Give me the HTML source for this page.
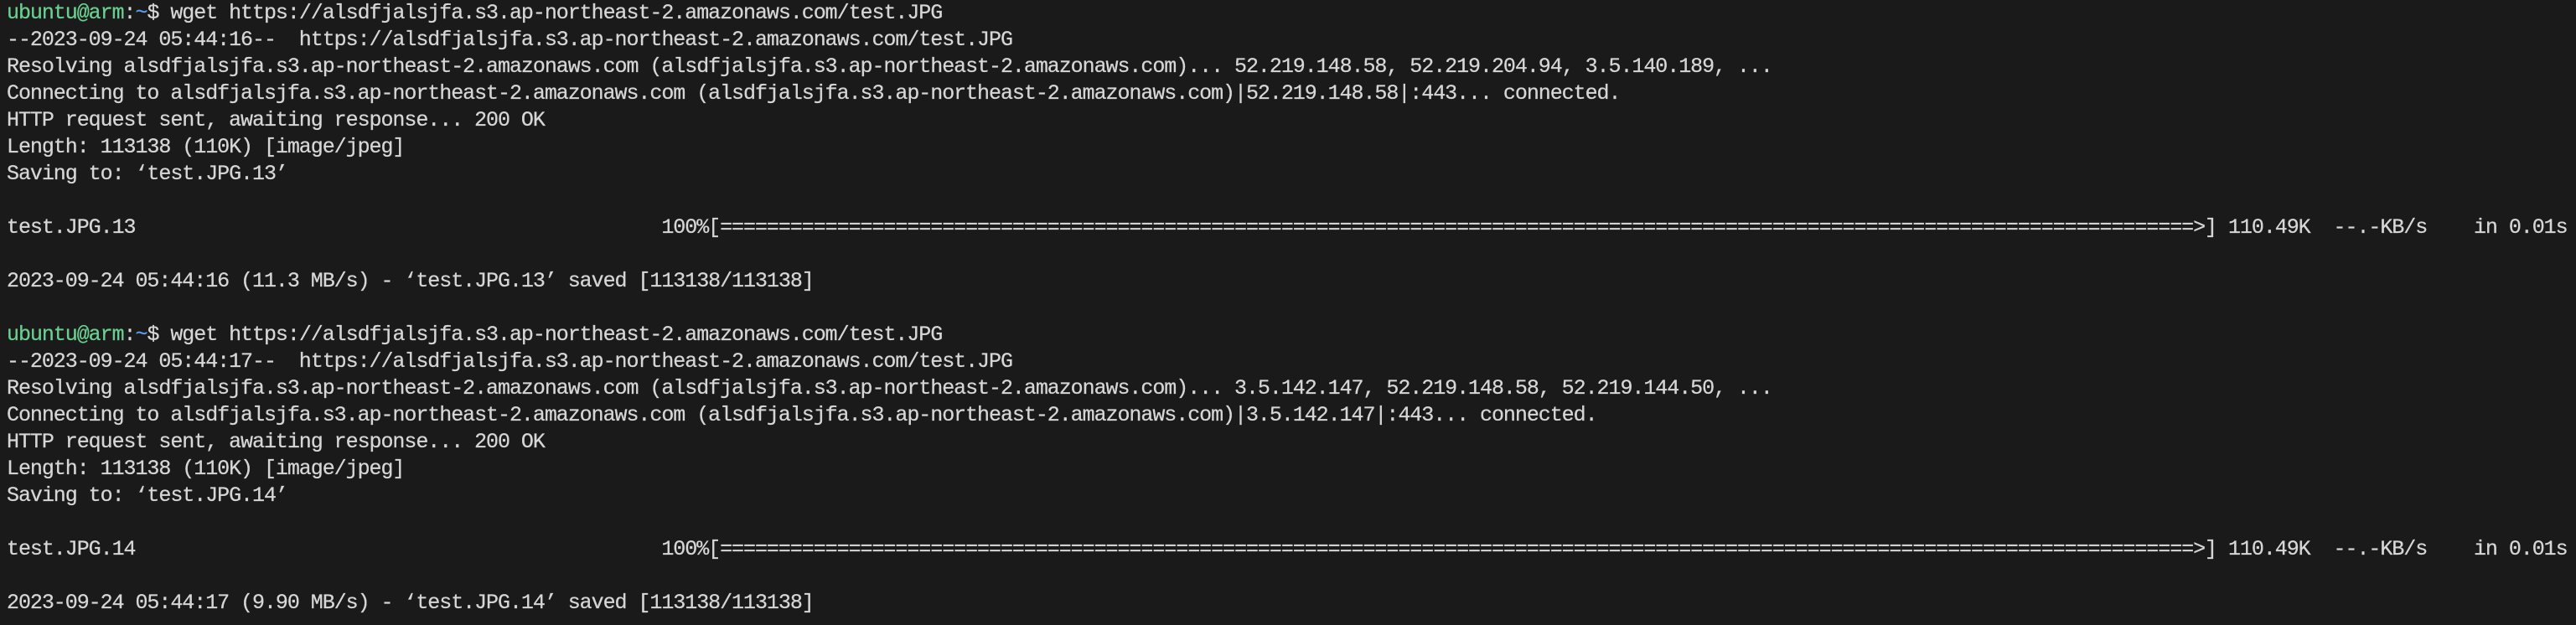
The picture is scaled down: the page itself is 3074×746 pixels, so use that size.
<!DOCTYPE html>
<html><head><meta charset="utf-8"><style>
html,body{margin:0;padding:0;background:#1a1a1a;width:3074px;height:746px;overflow:hidden}
pre{margin:0;padding:0 0 0 8px;font-family:"Liberation Mono",monospace;font-size:25px;letter-spacing:-1.05px;line-height:32px;color:#d6d6d6;white-space:pre;-webkit-text-stroke:0.25px currentColor}
.g{color:#6acf8f}.b{color:#5a9cf2}
</style></head><body><pre><span class="g">ubuntu@arm</span>:<span class="b">~</span>$ wget https://alsdfjalsjfa.s3.ap-northeast-2.amazonaws.com/test.JPG
--2023-09-24 05:44:16--  https://alsdfjalsjfa.s3.ap-northeast-2.amazonaws.com/test.JPG
Resolving alsdfjalsjfa.s3.ap-northeast-2.amazonaws.com (alsdfjalsjfa.s3.ap-northeast-2.amazonaws.com)... 52.219.148.58, 52.219.204.94, 3.5.140.189, ...
Connecting to alsdfjalsjfa.s3.ap-northeast-2.amazonaws.com (alsdfjalsjfa.s3.ap-northeast-2.amazonaws.com)|52.219.148.58|:443... connected.
HTTP request sent, awaiting response... 200 OK
Length: 113138 (110K) [image/jpeg]
Saving to: ‘test.JPG.13’

test.JPG.13                                             100%[==============================================================================================================================>] 110.49K  --.-KB/s    in 0.01s

2023-09-24 05:44:16 (11.3 MB/s) - ‘test.JPG.13’ saved [113138/113138]

<span class="g">ubuntu@arm</span>:<span class="b">~</span>$ wget https://alsdfjalsjfa.s3.ap-northeast-2.amazonaws.com/test.JPG
--2023-09-24 05:44:17--  https://alsdfjalsjfa.s3.ap-northeast-2.amazonaws.com/test.JPG
Resolving alsdfjalsjfa.s3.ap-northeast-2.amazonaws.com (alsdfjalsjfa.s3.ap-northeast-2.amazonaws.com)... 3.5.142.147, 52.219.148.58, 52.219.144.50, ...
Connecting to alsdfjalsjfa.s3.ap-northeast-2.amazonaws.com (alsdfjalsjfa.s3.ap-northeast-2.amazonaws.com)|3.5.142.147|:443... connected.
HTTP request sent, awaiting response... 200 OK
Length: 113138 (110K) [image/jpeg]
Saving to: ‘test.JPG.14’

test.JPG.14                                             100%[==============================================================================================================================>] 110.49K  --.-KB/s    in 0.01s

2023-09-24 05:44:17 (9.90 MB/s) - ‘test.JPG.14’ saved [113138/113138]
</pre></body></html>
